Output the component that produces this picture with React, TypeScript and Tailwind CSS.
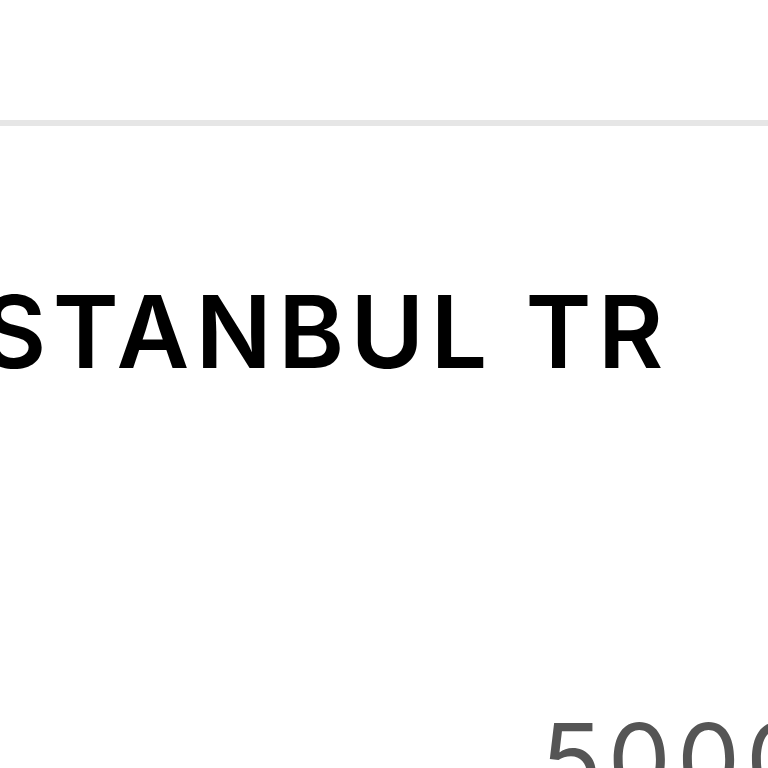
export default function App() {
  return (
    <div className="h-[768px] w-[768px] overflow-hidden bg-white" style={{ fontFamily: "Inter, 'Noto Sans', sans-serif" }}>
      <div className="h-[120px]" />
      <div className="h-[6px] bg-[#e6e6e6]" />
      <div className="mt-[156px] ml-[-53px] whitespace-nowrap text-[100px] font-semibold leading-none tracking-[0.065em] text-black">
        İSTANBUL TR
      </div>
      <div className="mt-[328px] ml-[541px] whitespace-nowrap text-[100px] font-normal leading-none tracking-[0.06em] text-[#555]">
        5000 TL
      </div>
    </div>
  )
}
